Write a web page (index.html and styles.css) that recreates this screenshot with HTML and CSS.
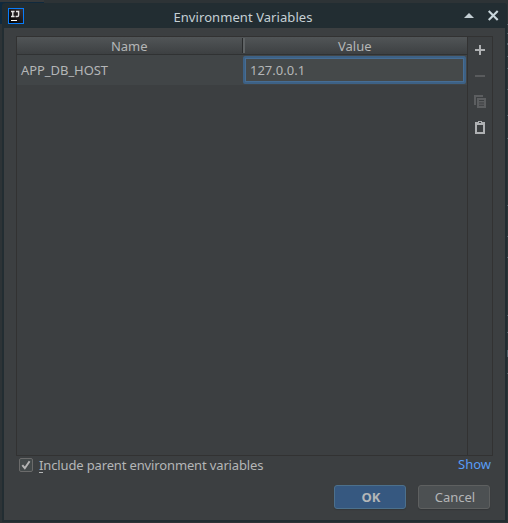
FILE: index.html
```
<!DOCTYPE html>
<html lang="en">
<head>
<meta charset="utf-8">
<title>Environment Variables</title>
<link rel="stylesheet" href="styles.css">
</head>
<body>
<div class="backdrop-tab"></div>
<svg class="backdrop-marks" width="2" height="523" shape-rendering="crispEdges" fill="#536068"><path d="M0 24h2v1H0zM0 33h2v1H0zM0 43h2v2H0zM0 56h2v1H0zM0 68h2v1H0zM0 89h2v1H0zM0 115h2v1H0zM0 138h2v1H0zM0 205h2v1H0zM0 236h2v1H0zM0 257h2v1H0zM0 315h2v1H0zM0 332h2v1H0zM0 350h2v7H0zM0 373h2v1H0z"/></svg>
<main class="dialog">
  <header class="titlebar">
    <svg class="logo" width="16" height="16" viewBox="0 0 16 16">
      <defs><linearGradient id="lg" x1="0" y1="1" x2="1" y2="0"><stop offset="0" stop-color="#000"/><stop offset="1" stop-color="#3a3235"/></linearGradient></defs>
      <rect width="16" height="16" fill="#087cfa"/><rect x="1" y="1" width="14" height="14" fill="url(#lg)"/>
      <path d="M3 3.5h3.6M4.8 3.5v5M3 8.5h3.6M8 3.5h2.6v3.7q0 1.3-1.4 1.3H7.6" fill="none" stroke="#e4e4e4" stroke-width="1.4"/>
      <path d="M3 12h6v1H3z" fill="#fff"/>
    </svg>
    <h1>Environment Variables</h1>
    <div class="controls">
      <svg width="10" height="5" viewBox="0 0 10 5"><path d="M5 0 10 5H0z" fill="#c3ced3"/></svg>
      <svg width="11" height="11" viewBox="0 0 11 11"><path d="M.7 1l9 9M9.7 1l-9 9" stroke="#c9d6dc" stroke-width="2.1"/></svg>
    </div>
  </header>
  <section class="content">
    <div class="panel">
      <div class="table">
        <div class="head"><div class="th name">Name</div><div class="th">Value</div></div>
        <div class="row"><div class="cell">APP_DB_HOST</div><div class="editor">127.0.0.1</div></div>
      </div>
      <aside class="tools">
        <svg width="16" height="16" viewBox="0 0 16 16"><path d="M7 3h2v4h4v2H9v4H7V9H3V7h4z" fill="#afb1b3"/></svg>
        <svg width="16" height="16" viewBox="0 0 16 16"><path d="M3 7h10v2H3z" fill="#595b5d"/></svg>
        <svg width="16" height="16" viewBox="0 0 16 16" fill="#5c5e60"><path d="M2 1h9v2H4v8H2z"/><path fill-rule="evenodd" d="M5 4h9v10H5zM7 6v1h5V6zM7 8.4v1h5v-1zM7 10.8v1h5v-1z"/></svg>
        <svg width="16" height="16" viewBox="0 0 16 16"><path fill="#afb1b3" fill-rule="evenodd" d="M3 2h3V1h4v1h3v12H3zM5 5v7h6V5zM7 2v1h2V2z"/></svg>
      </aside>
    </div>
    <div class="options">
      <label class="check">
        <svg width="14" height="14" viewBox="0 0 14 14"><rect x=".5" y=".5" width="13" height="13" rx="1.5" fill="#43494a" stroke="#6b6b6b"/><path d="M3.3 7.2l2.5 3 4.8-7" fill="none" stroke="#b4b4b4" stroke-width="2"/></svg>
        <span class="label"><span class="mnemonic">I</span>nclude parent environment variables</span>
      </label>
      <a class="show">Show</a>
    </div>
    <footer class="actions">
      <button class="btn primary">OK</button>
      <button class="btn">Cancel</button>
    </footer>
  </section>
</main>
</body>
</html>
```
FILE: styles.css
```
* { box-sizing: border-box; }
body {
  margin: 0;
  width: 508px;
  height: 523px;
  padding: 3px 1px 0 2px;
  overflow: hidden;
  background: #2d3336;
  font: 13px/18px "Noto Sans", sans-serif;
  color: #b4b6b7;
}
.backdrop-tab {
  position: absolute;
  left: 0;
  top: 0;
  width: 44px;
  height: 24px;
  background: #10293d;
  border-top: 2px solid #35383a;
}
.backdrop-marks { position: absolute; right: 0; top: 0; }
.dialog {
  position: relative;
  width: 505px;
  height: 519px;
  background: #222d32;
  padding: 0 2px 2px;
  border-radius: 3px 3px 0 0;
}
.titlebar {
  height: 25px;
  display: grid;
  grid-template-columns: 60px 1fr 60px;
  align-items: center;
}
.logo { margin: 1px 0 0 4px; }
h1 {
  margin: 2px 0 0;
  padding-right: 23px;
  text-align: center;
  font-size: 13px;
  font-weight: 400;
  letter-spacing: 0.07px;
  color: #c5d0d5;
}
.controls {
  display: flex;
  align-items: center;
  justify-content: flex-end;
  gap: 14px;
  padding: 0 6px 0 0;
}
.content { height: 492px; background: #3c3f41; padding: 8px 12px 0; }
.panel {
  display: flex;
  width: 477px;
  height: 420px;
  border: 1px solid #323232;
}
.table { width: 450px; }
.head {
  display: flex;
  height: 18px;
  background: linear-gradient(#515557, #3d4042);
  border-bottom: 1px solid #303233;
  text-align: center;
}
.th { flex: 1; line-height: 18px; }
.name { position: relative; padding-right: 1px; }
.name::after {
  content: "";
  position: absolute;
  right: -2px;
  top: 1px;
  width: 2px;
  height: 15px;
  background: #5f6365;
  border-left: 1px solid #292b2c;
}
.row { display: flex; height: 30px; background: #414547; }
.cell { width: 226px; padding: 6px 4px; letter-spacing: -0.06px; }
.editor {
  width: 223px;
  height: 28px;
  margin-top: 1px;
  padding: 3px 5px;
  border: 2px solid #3d6185;
  border-radius: 2px;
  background: #45494a;
  box-shadow: inset 0 0 0 1px #466d94;
}
.tools {
  width: 25px;
  border-left: 1px solid #323232;
  display: flex;
  flex-direction: column;
  align-items: center;
  gap: 10px;
  padding-top: 5px;
}
.options {
  display: flex;
  justify-content: space-between;
  height: 18px;
  padding: 0 2px 0 3px;
}
.check { display: flex; align-items: center; gap: 6px; }
.label { letter-spacing: -0.14px; }
.mnemonic { border-bottom: 1px solid #b4b6b7; display: inline-block; line-height: 14px; }
.show { color: #589df6; line-height: 17px; }
.actions {
  display: flex;
  justify-content: flex-end;
  gap: 12px;
  padding: 11px 3px 0 0;
}
.btn {
  width: 72px;
  height: 24px;
  padding: 0 0 0 2px;
  border: 1px solid #5e6060;
  border-radius: 3px;
  background: #4c5052;
  box-shadow: 0 1px 1px #343739;
  font: 13px/20px "Noto Sans", sans-serif;
  color: #b4b6b7;
}
.primary { background: #365880; border-color: #4c708c; font-weight: 700; }
```
